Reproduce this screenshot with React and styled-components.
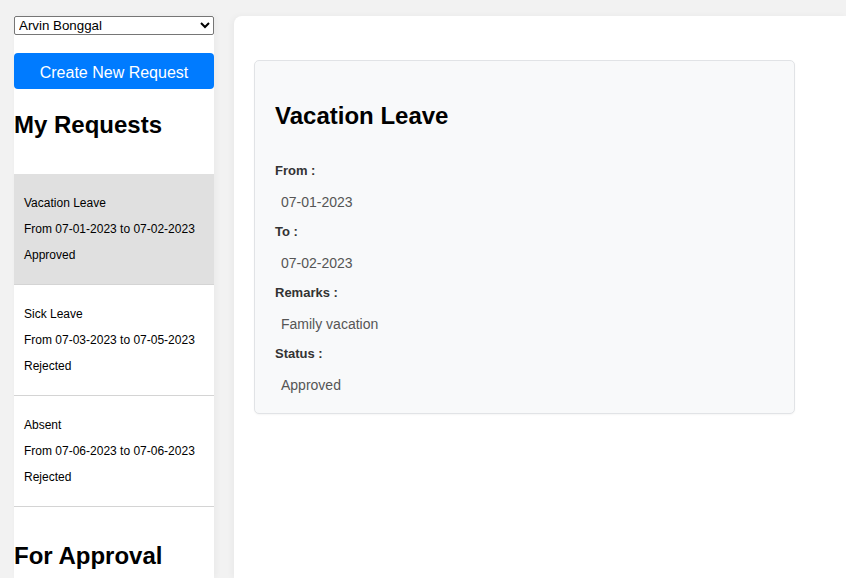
import React from 'react';
import styled, { createGlobalStyle } from 'styled-components';

const GlobalStyle = createGlobalStyle`
  html, body {
    margin: 0;
    padding: 0;
    background: #f2f2f2;
    font-family: "Liberation Sans", Arial, sans-serif;
    overflow: hidden;
  }
`;

const Layout = styled.div`
  display: flex;
  align-items: stretch;
  gap: 20px;
  padding: 16px 0 0 14px;
  height: 578px;
  box-sizing: border-box;
`;

const Sidebar = styled.aside`
  width: 200px;
  flex-shrink: 0;
  background: #fff;
  box-shadow: 2px 0 6px rgba(0, 0, 0, 0.04);
`;

const UserSelect = styled.select`
  display: block;
  width: 200px;
  height: 19px;
  margin: 0 0 18px;
  font-family: "Liberation Sans", Arial, sans-serif;
  font-size: 13.33px;
  border: 1px solid #767676;
  border-radius: 2px;
  background: #fff;
  color: #000;
`;

const CreateButton = styled.button`
  display: block;
  width: 200px;
  height: 36px;
  padding: 3px 0 0;
  border: none;
  border-radius: 4px;
  background: #007bff;
  color: #fff;
  font-family: "Liberation Sans", Arial, sans-serif;
  font-size: 16px;
  cursor: pointer;
`;

const SectionTitle = styled.h2`
  font-size: 24px;
  line-height: 28px;
  font-weight: bold;
  margin: ${(p) => p.$top || 20}px 0 ${(p) => p.$bottom || 20}px;
  color: #000;
`;

const RequestList = styled.ul`
  list-style: none;
  margin: 0;
  padding: 0;
`;

const RequestItem = styled.li`
  padding: 10px;
  background: ${(p) => (p.$active ? '#e0e0e0' : '#fff')};
  border-bottom: 1px solid #d4d4d4;
  cursor: pointer;
`;

const ItemLine = styled.p`
  margin: 12px 0;
  font-size: 12px;
  line-height: 14px;
  color: #000;
`;

const Main = styled.main`
  flex: 1;
  background: #fff;
  border-radius: 8px 0 0 0;
  box-shadow: -2px 0 6px rgba(0, 0, 0, 0.04);
  padding: 44px 0 0 20px;
`;

const DetailCard = styled.section`
  width: 541px;
  box-sizing: border-box;
  background: #f8f9fa;
  border: 1px solid #e1e3e6;
  border-radius: 5px;
  padding: 0 20px 20px;
  box-shadow: 0 1px 2px rgba(0, 0, 0, 0.04);
`;

const DetailTitle = styled.h2`
  font-size: 24px;
  line-height: 28px;
  font-weight: bold;
  margin: 0;
  padding: 41px 0 19px;
  color: #000;
`;

const FieldLabel = styled.label`
  display: block;
  margin-top: 14px;
  font-size: 13px;
  line-height: 15px;
  font-weight: bold;
  color: #333;
`;

const FieldValue = styled.p`
  margin: 16px 0 0;
  padding-left: 6px;
  font-size: 14px;
  line-height: 16px;
  color: #555;
`;

const requests = [
  { type: 'Vacation Leave', from: '07-01-2023', to: '07-02-2023', status: 'Approved', remarks: 'Family vacation' },
  { type: 'Sick Leave', from: '07-03-2023', to: '07-05-2023', status: 'Rejected', remarks: '' },
  { type: 'Absent', from: '07-06-2023', to: '07-06-2023', status: 'Rejected', remarks: '' },
];

export default function App() {
  const selected = requests[0];

  return (
    <>
      <GlobalStyle />
      <Layout>
        <Sidebar>
          <UserSelect defaultValue="arvin">
            <option value="arvin">Arvin Bonggal</option>
          </UserSelect>
          <CreateButton>Create New Request</CreateButton>
          <SectionTitle $top={22} $bottom={35}>My Requests</SectionTitle>
          <RequestList>
            {requests.map((r, i) => (
              <RequestItem key={r.type} $active={i === 0}>
                <ItemLine>{r.type}</ItemLine>
                <ItemLine>From {r.from} to {r.to}</ItemLine>
                <ItemLine>{r.status}</ItemLine>
              </RequestItem>
            ))}
          </RequestList>
          <SectionTitle $top={35}>For Approval</SectionTitle>
        </Sidebar>
        <Main>
          <DetailCard>
            <DetailTitle>{selected.type}</DetailTitle>
            <FieldLabel>From :</FieldLabel>
            <FieldValue>{selected.from}</FieldValue>
            <FieldLabel>To :</FieldLabel>
            <FieldValue>{selected.to}</FieldValue>
            <FieldLabel>Remarks :</FieldLabel>
            <FieldValue>{selected.remarks}</FieldValue>
            <FieldLabel>Status :</FieldLabel>
            <FieldValue>{selected.status}</FieldValue>
          </DetailCard>
        </Main>
      </Layout>
    </>
  );
}
